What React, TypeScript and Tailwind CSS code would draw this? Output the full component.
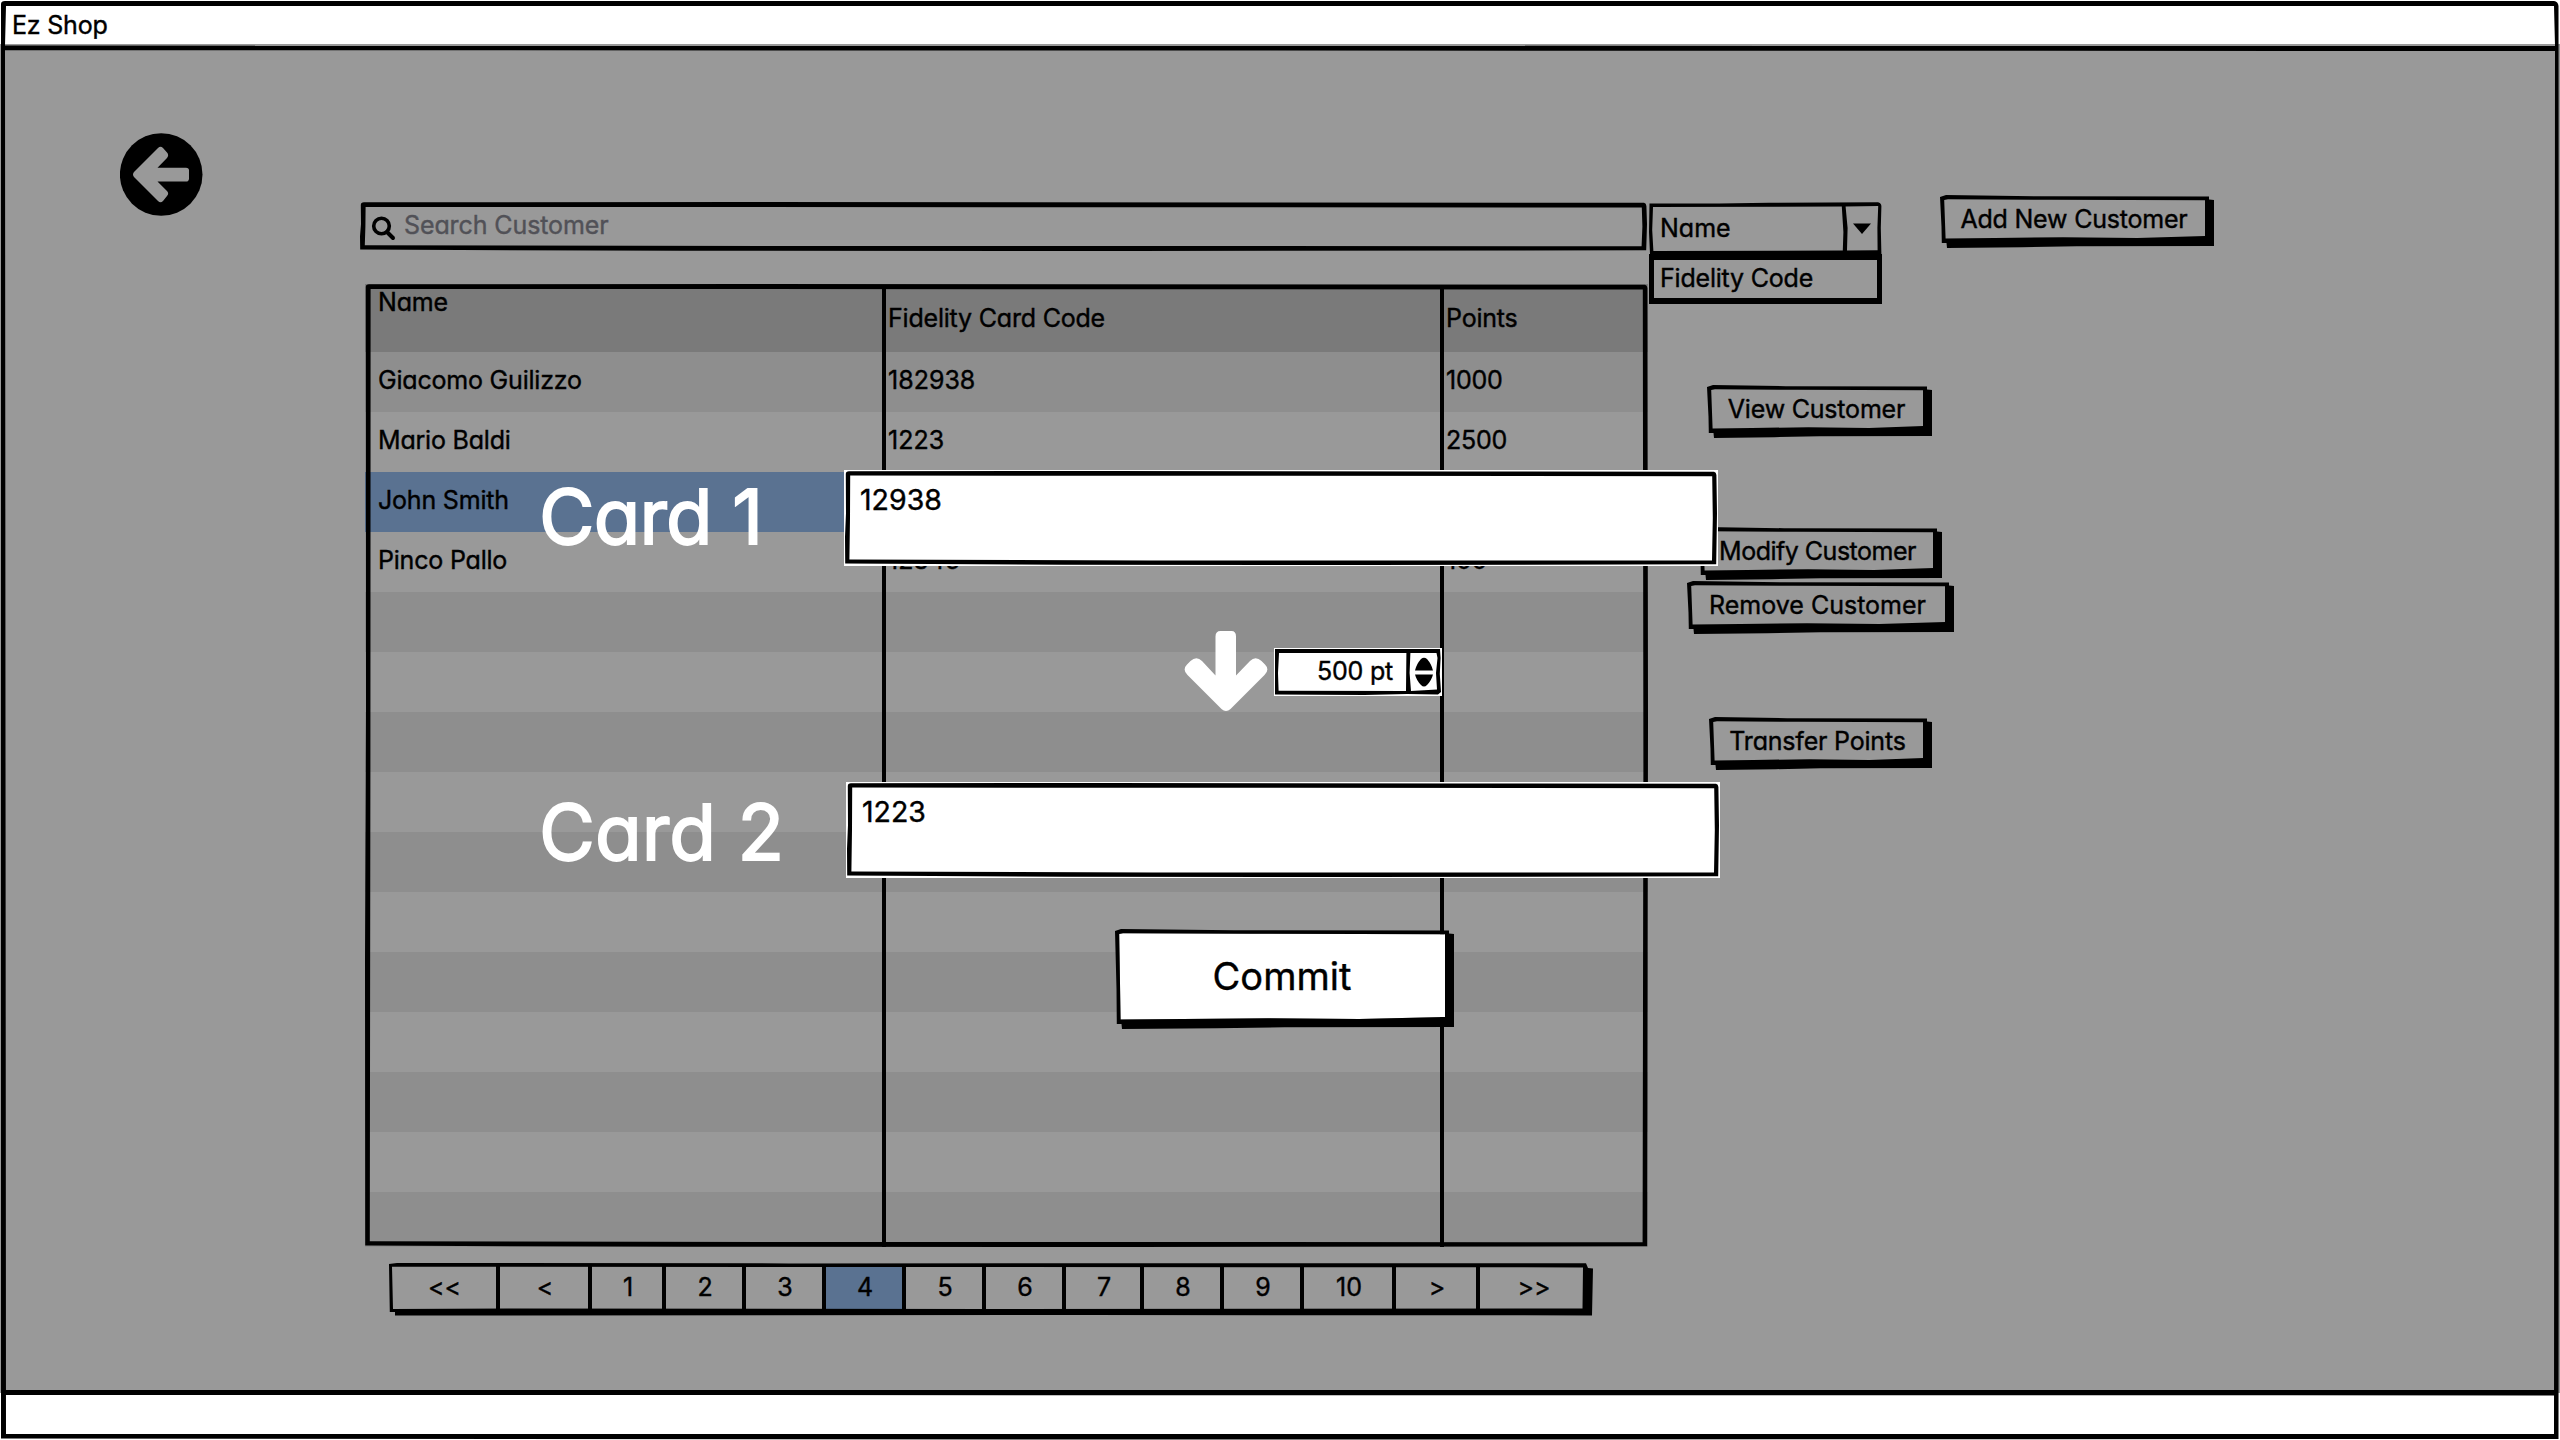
import type { ReactNode } from "react";

/* Hand-drawn rectangle: slightly uneven outer edge with a punched-out inside. */
function SketchBox({ w, h, t = 5, fill = "none" }: { w: number; h: number; t?: number; fill?: string }) {
  const outer = `M0.8 3 Q0.8 0.4 4 0.3 L${w * 0.3} 0 L${w * 0.7} 0.4 L${w - 3} 0.8 Q${w - 0.8} 1.2 ${w - 0.6} 4 L${w} ${h * 0.45} L${w - 0.8} ${h - 0.8} L${w * 0.6} ${h} L${w * 0.25} ${h - 0.2} L0.2 ${h - 1.4} L0 ${h * 0.7} L1 ${h * 0.45} Z`;
  const inner = `M${t + 0.6} ${t} L${t + 0.4} ${h * 0.5} L${t - 0.2} ${h - t - 0.8} L${w * 0.35} ${h - t} L${w - t - 0.4} ${h - t + 0.2} L${w - t + 0.4} ${h * 0.5} L${w - t - 0.2} ${t + 0.6} L${w * 0.5} ${t + 0.2} Z`;
  return (
    <svg className="pointer-events-none absolute inset-0" width={w} height={h} viewBox={`0 0 ${w} ${h}`}>
      {fill !== "none" && <path d={inner} fill={fill} />}
      <path d={`${outer} ${inner}`} fillRule="evenodd" fill="#000" />
    </svg>
  );
}

/* Hand-drawn raised button with its drop edge on the right and the bottom. */
function SketchButtonFrame({ w, h, fill = "none" }: { w: number; h: number; fill?: string }) {
  const outer = `M0 2 L6 0 L${w * 0.35} 1.2 L${w - 5} 1.6 L${w - 5} 4.4 L${w} 5 L${w} ${h - 2} L${w * 0.5} ${h - 1.8} L${w * 0.3} ${h - 0.8} L7 ${h} L6.5 ${h - 5} L1.8 ${h - 5} L1.5 ${h * 0.6} Z`;
  const inner = `M4.2 5 L8 4.3 L${w * 0.4} 4.8 L${w - 9} 5.2 L${w - 9} ${h - 12} L${w * 0.72} ${h - 10} L${w * 0.45} ${h - 10.8} L${w * 0.2} ${h - 10} L5.6 ${h - 9.4} Z`;
  return (
    <svg className="pointer-events-none absolute inset-0" width={w} height={h} viewBox={`0 0 ${w} ${h}`}>
      {fill !== "none" && <path d={inner} fill={fill} />}
      <path d={`${outer} ${inner}`} fillRule="evenodd" fill="#000" />
    </svg>
  );
}

function SketchButton({ w, className, children }: { w: number; className: string; children: ReactNode }) {
  return (
    <button className={`relative flex h-[53px] items-center justify-center whitespace-nowrap pr-[6px] pb-[5px] ${className}`}>
      <SketchButtonFrame w={w} h={53} />
      <span className="relative">{children}</span>
    </button>
  );
}

const customers = [
  ["Giacomo Guilizzo", "182938", "1000"],
  ["Mario Baldi", "1223", "2500"],
  ["John Smith", "", ""],
  ["Pinco Pallo", "12345", "100"],
];

const blankRows = Array.from({ length: 11 }, (_, i) => i);

const pages: [string, string][] = [
  ["<<", "w-[105px]"],
  ["<", "w-[92px]"],
  ["1", "w-[74px]"],
  ["2", "w-[80px]"],
  ["3", "w-[80px]"],
  ["4", "w-[80px]"],
  ["5", "w-[80px]"],
  ["6", "w-[80px]"],
  ["7", "w-[78px]"],
  ["8", "w-[80px]"],
  ["9", "w-[80px]"],
  ["10", "w-[92px]"],
  [">", "w-[84px]"],
  [">>", "w-[110px]"],
];

function CustomerTable() {
  return (
    <div className="relative mt-[33px] ml-[5px] h-[963px] w-[1283px] overflow-hidden tracking-[-0.2px]">
      <div className="flex h-[68px] bg-[#7a7a7a]">
        <div className="w-[519px] pt-[3px] pl-[13px]">Name</div>
        <div className="w-[558px] pt-[19px] pl-[4px]">Fidelity Card Code</div>
        <div className="pt-[19px] pl-[4px]">Points</div>
      </div>
      {customers.map(([name, code, points], i) => (
        <div
          key={name}
          className={`flex h-[60px] pt-[13px] ${i === 2 ? "bg-[#5a7291]" : i % 2 === 0 ? "bg-[#8e8e8e]" : "bg-[#999999]"}`}
        >
          <div className="w-[519px] pl-[13px]">{name}</div>
          <div className="w-[558px] pl-[4px] tracking-normal">{code}</div>
          <div className="pl-[4px]">{points}</div>
        </div>
      ))}
      {blankRows.map((i) => (
        <div key={i} className={`h-[60px] ${i % 2 === 0 ? "bg-[#8e8e8e]" : "bg-[#999999]"}`} />
      ))}
      <div className="absolute top-[2px] left-[517px] h-[961px] w-1 bg-black" />
      <div className="absolute top-[2px] left-[1075px] h-[961px] w-1 bg-black" />
      <SketchBox w={1283} h={963} t={5} />
    </div>
  );
}

function Pagination() {
  return (
    <div className="relative mt-[16px] ml-[29px] flex h-[53px] w-[1205px] pt-[2px] pl-[2px]">
      {pages.map(([label, width], i) => (
        <div
          key={label}
          className={`flex h-[46px] items-center justify-center pb-[2px] pl-[2px] text-[25px] ${width} ${i > 0 ? "border-l-4 border-black" : ""} ${label === "4" ? "bg-[#5a7291]" : ""}`}
        >
          {label}
        </div>
      ))}
      <svg className="absolute inset-0" width="1205" height="53" viewBox="0 0 1205 53">
        <path
          d="M0 1 L8 0 L400 0.4 L1197 0.2 L1199 5 L1204 5.5 L1203 52.4 L700 52 L80 52.6 L6 52.5 L6 49 L0.8 49 Z M3 3.8 L4 46 L120 45.4 L600 46 L1193.5 45.4 L1194 4.4 L600 4 Z"
          fillRule="evenodd"
          fill="#000"
        />
      </svg>
    </div>
  );
}

function SearchSelect() {
  return (
    <div className="mt-[7px] w-[233px]">
      <div className="relative flex h-[52px] items-center pb-[1px] pl-[11px]">
        <span>Name</span>
        <svg className="absolute inset-0" width="233" height="52" viewBox="0 0 233 52">
          <path
            d="M0.5 1.4 L70 1.4 L120 0.8 L229 0.2 Q232 0.6 232.4 4 L231.8 26 L232.4 52 L1 52 L0 30 Z M4 5 L3.2 28 L4.4 49 L193.8 48.6 L194.4 30 L192.8 4.6 Z M196.6 4.4 L198.6 26 L198 48.6 L228.6 48.2 L228.4 26 L229.2 4 Z"
            fillRule="evenodd"
            fill="#000"
          />
          <path d="M204 21.5 H222 L213 32 Z" fill="#000" />
        </svg>
      </div>
      <div className="h-[50px] border-[5px] border-t-[6px] border-b-[6px] border-black pl-[6px]">
        <div className="mt-[3px] tracking-[-0.2px]">Fidelity Code</div>
      </div>
    </div>
  );
}

function CardInput({ value }: { value: string }) {
  return (
    <div className="relative h-[96px] w-[874px] bg-white pt-[12px] pl-[16px] text-[28.5px] leading-[36px]">
      <div className="absolute top-[1px] left-[1px]">
        <SketchBox w={872} h={94} t={4.6} />
      </div>
      {value}
    </div>
  );
}

function TransferOverlay() {
  return (
    <div className="absolute top-[470px] left-[539px] flex w-[1190px] flex-col">
      <div className="flex items-center">
        <div className="w-[305px] pb-[4px] text-[76px] leading-[90px] tracking-[-0.8px] text-white [-webkit-text-stroke:1.8px_white]">Card 1</div>
        <CardInput value="12938" />
      </div>
      <div className="mt-[64px] flex h-[82px] pl-[644px]">
        <svg width="86" height="82" viewBox="0 0 86 82">
          <path
            d="M37.5 1 H48.5 Q53 1 53 6.5 V45.5 L67 31 Q72.5 25.5 78.5 31 L82 34.5 Q87 39.5 81.5 45 L47.5 79 Q43 83 38.5 79 L4.5 45 Q-1 39.5 4 34.5 L7.5 31 Q13.5 25.5 19 31 L32.5 45.5 V6.5 Q32.5 1 37.5 1 Z"
            fill="#fff"
          />
        </svg>
        <div className="relative mt-[18px] ml-[5px] flex h-[48px] w-[168px] items-center justify-end bg-white pr-[49px] pb-[2px]">
          <span className="tracking-[-0.2px]">500 pt</span>
          <svg className="absolute inset-0" width="168" height="48" viewBox="0 0 168 48">
            <path
              d="M1 1 L166 1 L166.6 10 L165.8 26 L167 44 L164 46.5 L133 46 L90 47 L1 46.5 Z M5 5 L4 25 L4.6 42.8 L132 43 L132.4 5 Z M136.4 5 L135.6 25 L137 43 L163 41.5 L162 25 L163.5 10 L162.5 5 Z"
              fillRule="evenodd"
              fill="#000"
            />
            <path d="M141 22.5 Q142.5 16 147 11 Q150 8.5 153 11 Q157.5 16 159 22.5 Z" fill="#000" />
            <path d="M141 26.5 H159 Q157.5 32.5 153 37 Q150 40 147 37 Q142.5 32.5 141 26.5 Z" fill="#000" />
          </svg>
        </div>
      </div>
      <div className="mt-[70px] flex items-center">
        <div className="w-[307px] pt-[4px] text-[76.5px] leading-[90px] text-white [-webkit-text-stroke:1.8px_white]">Card 2</div>
        <CardInput value="1223" />
      </div>
      <button className="relative mt-[51px] ml-[576px] flex h-[100px] w-[339px] items-center justify-center pr-[5px] pb-[6px] text-[38px]">
        <SketchButtonFrame w={339} h={100} fill="#fff" />
        <span className="relative">Commit</span>
      </button>
    </div>
  );
}

export default function App() {
  return (
    <div className="relative flex h-[1440px] w-[2560px] flex-col overflow-hidden bg-[#999999] font-['Inter',sans-serif] text-[25px] leading-[30px] text-black [-webkit-text-stroke:0.4px_currentColor] [font-feature-settings:'cv11'_1]">
      <header className="h-[44px] shrink-0 bg-white pt-[10px] pl-[12px] tracking-[-0.2px]">Ez Shop</header>

      <main className="flex h-[1349px] shrink-0">
        <div className="w-[360px] pt-[89px] pl-[120px]">
          <svg width="83" height="83" viewBox="0 0 83 83">
            <circle cx="41.2" cy="41.5" r="41.3" fill="#000" />
            <path
              d="M69 37.5 V45.5 Q69 48.6 66 48.6 H37.5 L47 58 Q49.3 60.5 47 63 L43 68 Q40.5 70.5 38 68 L14 44 Q12 41.5 14 39 L38 15 Q40.5 12.5 43 15 L47 19.5 Q49.3 22 47 25 L37.5 34.7 H66 Q69 34.7 69 37.5 Z"
              fill="#999999"
            />
          </svg>
        </div>

        <div className="w-[1287px] pt-[158px]">
          <div className="relative flex h-[49px] items-center pb-[3px] pl-[44px] tracking-[-0.1px] text-[#515157]">
            <SketchBox w={1287} h={49} />
            <svg className="absolute top-[14px] left-[11px]" width="26" height="26" viewBox="0 0 26 26" fill="none" stroke="#000">
              <circle cx="10.5" cy="10" r="7.8" strokeWidth="3.6" />
              <path d="M16 16 L22 22" strokeWidth="4" strokeLinecap="round" />
            </svg>
            Search Customer
          </div>
          <CustomerTable />
          <Pagination />
        </div>

        <div className="ml-[2px] flex flex-col items-start pt-[151px]">
          <div className="flex h-[109px] items-start">
            <SearchSelect />
            <SketchButton w={274} className="ml-[58px] w-[274px] tracking-[-0.2px]">Add New Customer</SketchButton>
          </div>
          <SketchButton w={225} className="mt-[81px] ml-[58px] w-[225px] tracking-[-0.2px]">View Customer</SketchButton>
          <SketchButton w={243} className="mt-[89px] ml-[50px] w-[243px] tracking-[-0.5px]">Modify Customer</SketchButton>
          <SketchButton w={267} className="mt-[1px] ml-[38px] w-[267px]">Remove Customer</SketchButton>
          <SketchButton w={223} className="mt-[83px] ml-[60px] w-[223px] tracking-[-0.2px]">Transfer Points</SketchButton>
        </div>
      </main>

      <footer className="h-[47px] shrink-0 bg-white" />

      <svg className="pointer-events-none absolute inset-0" width="2560" height="1440" viewBox="0 0 2560 1440">
        <path
          d="M1 4 Q1 1 5 1 L1500 1 L2554 1 Q2558 1.5 2558.5 6 L2559 700 L2558.5 1439 L1200 1439.6 L1 1438.6 L1 700 Z M6 6 L5 45.5 L6 1434 L2554 1434 L2555 45.5 L2554 6 Z"
          fillRule="evenodd"
          fill="#000"
        />
        <path d="M4 45.6 L2556 46 L2556 51 L4 50.2 Z" fill="#000" />
        <path d="M4 1390 H2556 V1395.4 L4 1395 Z" fill="#000" />
      </svg>

      <TransferOverlay />
    </div>
  );
}
